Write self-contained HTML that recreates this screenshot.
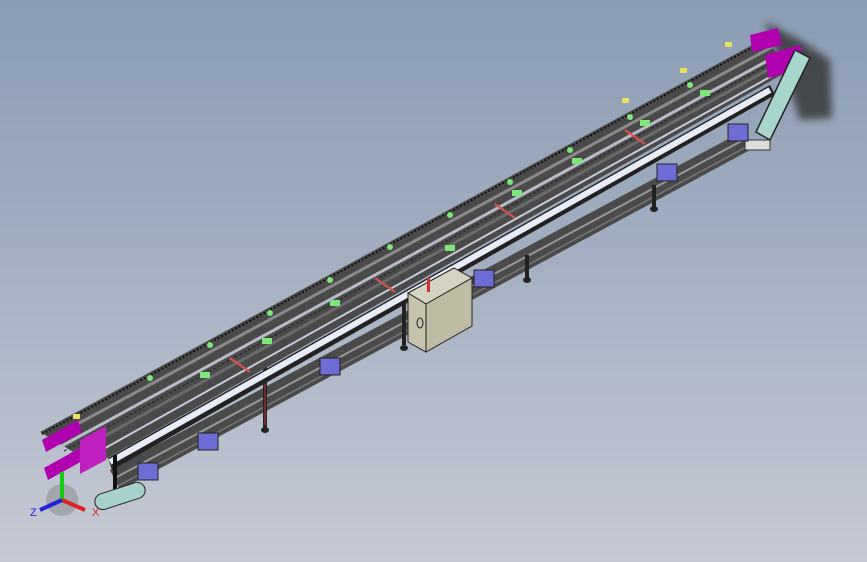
<!DOCTYPE html>
<html><head><style>
html,body{margin:0;padding:0;width:867px;height:562px;overflow:hidden}
body{background:linear-gradient(180deg,#8b9cb3 0%,#a3afc1 45%,#c6cad4 100%);font-family:"Liberation Sans",sans-serif}
</style></head><body>
<svg width="867" height="562" viewBox="0 0 867 562" xmlns="http://www.w3.org/2000/svg">
<defs><filter id="b"><feGaussianBlur stdDeviation="4"/></filter></defs>
<polygon points="765,22 800,40 830,60 832,118 800,120 790,90" fill="#333" opacity="0.8" filter="url(#b)"/>
<!-- lower frame rail -->
<polygon points="110,470 745,130 750,150 120,490" fill="#4a4a4a"/>
<polyline points="115,478 747,138" stroke="#999" stroke-width="2" fill="none"/>
<polyline points="118,486 748,146" stroke="#777" stroke-width="1.5" fill="none"/>
<!-- legs -->
<g stroke="#222" stroke-width="4">
<line x1="265" y1="365" x2="265" y2="428"/><line x1="404" y1="300" x2="404" y2="345"/>
<line x1="527" y1="255" x2="527" y2="278"/><line x1="654" y1="185" x2="654" y2="207"/>
</g>
<line x1="265" y1="370" x2="265" y2="425" stroke="#c33" stroke-width="1"/>
<g fill="#222"><ellipse cx="265" cy="430" rx="4" ry="3"/><ellipse cx="404" cy="348" rx="4" ry="3"/><ellipse cx="527" cy="280" rx="4" ry="3"/><ellipse cx="654" cy="209" rx="4" ry="3"/></g>
<!-- white belt -->
<polygon points="108,458 770,85 775,95 112,470" fill="#222"/>
<polyline points="110,462 770,90" stroke="#e8ecf6" stroke-width="6" fill="none"/>
<!-- upper conveyor -->
<polygon points="40,432 765,38 790,70 95,465" fill="#4a4a4a"/>
<polyline points="48,440 772,47" stroke="#8a8a8a" stroke-width="3" fill="none"/>
<polyline points="58,448 778,55" stroke="#b8bcc6" stroke-width="3" fill="none"/>
<polyline points="70,455 782,62" stroke="#6a6a6a" stroke-width="3" fill="none"/>
<polyline points="82,461 786,68" stroke="#c8ccd8" stroke-width="2" fill="none"/>
<polyline points="42,434 766,40" stroke="#111" stroke-width="2" fill="none" stroke-dasharray="2 2"/>
<polyline points="64,451 780,58" stroke="#222" stroke-width="1" fill="none" stroke-dasharray="3 2"/>
<g stroke="#e05050" stroke-width="2">
<line x1="230" y1="358" x2="250" y2="372"/><line x1="375" y1="278" x2="395" y2="292"/><line x1="495" y1="204" x2="515" y2="218"/><line x1="625" y1="130" x2="645" y2="144"/>
</g>
<g fill="#7de87a">
<circle cx="150" cy="378" r="3"/><circle cx="210" cy="345" r="3"/><circle cx="270" cy="313" r="3"/><circle cx="330" cy="280" r="3"/><circle cx="390" cy="247" r="3"/><circle cx="450" cy="215" r="3"/><circle cx="510" cy="182" r="3"/><circle cx="570" cy="150" r="3"/><circle cx="630" cy="117" r="3"/><circle cx="690" cy="85" r="3"/>
<rect x="200" y="372" width="10" height="6"/><rect x="262" y="338" width="10" height="6"/><rect x="330" y="300" width="10" height="6"/><rect x="445" y="245" width="10" height="6"/><rect x="512" y="190" width="10" height="6"/><rect x="572" y="158" width="10" height="6"/><rect x="640" y="120" width="10" height="6"/><rect x="700" y="90" width="10" height="6"/>
</g>
<g fill="#e8e060">
<rect x="73" y="414" width="7" height="5"/><rect x="622" y="98" width="7" height="5"/><rect x="680" y="68" width="7" height="5"/><rect x="725" y="42" width="7" height="5"/>
</g>
<polygon points="42,440 78,420 82,432 46,452" fill="#b000b0"/>
<polygon points="44,468 80,448 84,460 48,480" fill="#b000b0"/>
<polygon points="80,440 106,426 106,460 80,474" fill="#c020c0"/>
<line x1="115" y1="455" x2="115" y2="495" stroke="#111" stroke-width="4"/>
<polygon points="750,35 778,28 782,45 752,52" fill="#b000b0"/>
<polygon points="765,55 800,45 805,68 768,78" fill="#b000b0"/>
<polygon points="795,50 810,58 770,140 756,132" fill="#a8d6cc" stroke="#222" stroke-width="1.5"/>
<rect x="745" y="140" width="25" height="10" fill="#ddd" stroke="#333"/>
<rect x="94" y="488" width="52" height="16" rx="8" fill="#a8d0cc" stroke="#222" transform="rotate(-18 120 496)"/>
<g fill="#6c6cd4" stroke="#222" stroke-width="1">
<rect x="138" y="463" width="20" height="17"/><rect x="198" y="433" width="20" height="17"/><rect x="320" y="358" width="20" height="17"/><rect x="474" y="270" width="20" height="17"/><rect x="657" y="164" width="20" height="17"/><rect x="728" y="124" width="20" height="17"/>
</g>
<polygon points="408,293 454,268 472,278 426,304" fill="#d4d2c0" stroke="#222"/>
<polygon points="408,293 426,304 426,352 408,342" fill="#c6c3ad" stroke="#222"/>
<polygon points="426,304 472,278 472,326 426,352" fill="#bfbca6" stroke="#222"/>
<ellipse cx="420" cy="323" rx="3" ry="5" fill="none" stroke="#222"/>
<rect x="427" y="278" width="3" height="14" fill="#c33"/>
<circle cx="62" cy="500" r="16" fill="#777" opacity="0.4"/>
<line x1="62" y1="500" x2="62" y2="472" stroke="#1c1" stroke-width="4"/>
<line x1="62" y1="500" x2="85" y2="510" stroke="#d22" stroke-width="4"/>
<line x1="62" y1="500" x2="40" y2="510" stroke="#22d" stroke-width="4"/>
<text x="30" y="516" font-size="11" fill="#22d">Z</text>
<text x="92" y="516" font-size="11" fill="#d22">X</text>
</svg>
</body></html>
